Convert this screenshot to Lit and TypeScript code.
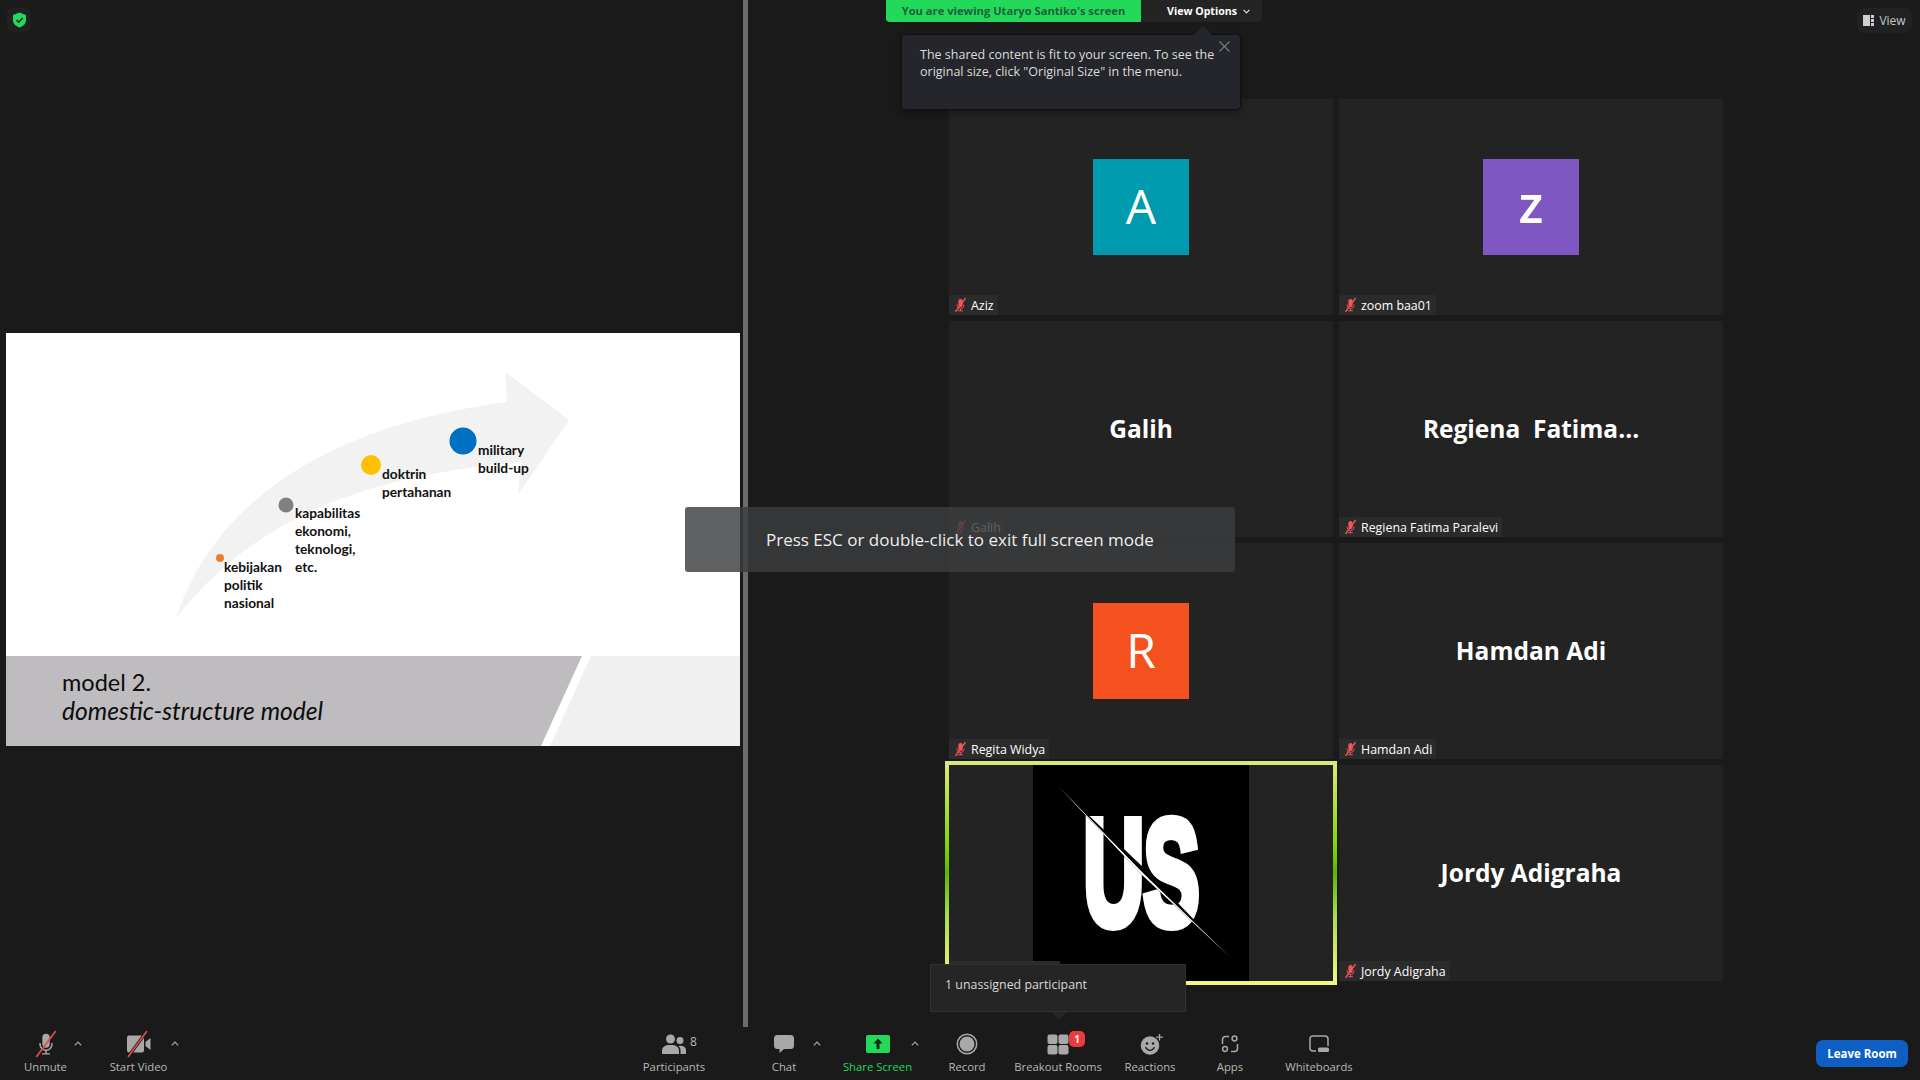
import { LitElement, html, css, svg } from 'lit';
import { customElement } from 'lit/decorators.js';

const micShape = svg`<path d="M12 2.5a3.4 3.4 0 0 0-3.4 3.4v6.2a3.4 3.4 0 0 0 6.8 0V5.9A3.4 3.4 0 0 0 12 2.5z"/><path d="M6.5 11v1.2a5.5 5.5 0 0 0 11 0V11" fill="none" stroke="currentColor" stroke-width="1.4"/><path d="M11.3 17.5h1.400v3h3v1.300H8.300v-1.300h3z"/>`;

const tileMic = html`<svg class="tag-mic" viewBox="0 0 24 24" fill="currentColor">${micShape}<path d="M4 23 20 1" stroke="#f2555a" stroke-width="2.4"/></svg>`;

const icons: Record<string, unknown> = {
  mic: html`<svg width="26" height="26" viewBox="0 0 24 24" fill="currentColor">${micShape}<path d="M3 24 21 0" stroke="#e8474e" stroke-width="1.6"/></svg>`,
  video: html`<svg width="28" height="26" viewBox="0 0 28 26" fill="currentColor"><path d="M2 6.500a2 2 0 0 1 2-2h13a2 2 0 0 1 2 2v13a2 2 0 0 1-2 2H4a2 2 0 0 1-2-2z"/><path d="M20.500 11 25.500 7v12l-5-4z"/><path d="M3 26 22 0" stroke="#1a1a1a" stroke-width="3"/><path d="M3 26 22 0" stroke="#e8474e" stroke-width="1.6"/></svg>`,
  people: html`<svg width="26" height="22" viewBox="0 0 26 22" fill="currentColor"><circle cx="9.5" cy="6" r="4.5"/><circle cx="19" cy="7.5" r="3.5"/><path d="M1 21v-3.500C1 14 4 12 9.500 12s8.500 2 8.500 5.500V21z"/><path d="M19.500 21v-3.500c0-2-.7-3.400-2-4.600 .6-.1 1.200-.1 1.800-.1 3.700 0 5.700 1.500 5.700 4.500V21z"/></svg>`,
  chat: html`<svg width="22" height="20" viewBox="0 0 22 20" fill="currentColor"><path d="M4.500 1h13A3.500 3.500 0 0 1 21 4.500v7a3.500 3.500 0 0 1-3.500 3.500H11l-4.500 4v-4h-2A3.500 3.500 0 0 1 1 11.500v-7A3.500 3.500 0 0 1 4.500 1z"/></svg>`,
  share: html`<svg width="24" height="18" viewBox="0 0 24 18"><rect width="24" height="18" rx="2" fill="#23d959"/><path d="M12 3.500 16.500 8.500h-3v5.500h-3V8.500h-3z" fill="#10291a"/></svg>`,
  record: html`<svg width="22" height="22" viewBox="0 0 22 22"><circle cx="11" cy="11" r="9.7" fill="none" stroke="currentColor" stroke-width="1.5"/><circle cx="11" cy="11" r="7.5" fill="currentColor"/></svg>`,
  rooms: html`<svg width="22" height="21" viewBox="0 0 22 21" fill="currentColor"><rect x="0.5" y="0.5" width="10" height="9.5" rx="2"/><rect x="11.5" y="0.5" width="10" height="9.5" rx="2"/><rect x="0.5" y="11" width="10" height="9.5" rx="2"/><rect x="11.5" y="11" width="10" height="9.5" rx="2"/></svg>`,
  reactions: html`<svg width="24" height="22" viewBox="-2 0 24 22"><circle cx="10" cy="12.5" r="9.3" fill="currentColor"/><circle cx="7" cy="10.5" r="1.2" fill="#1a1a1a"/><circle cx="13" cy="10.5" r="1.2" fill="#1a1a1a"/><path d="M5.800 14.500c1 2 2.500 2.800 4.200 2.800s3.200-.8 4.200-2.800" fill="none" stroke="#1a1a1a" stroke-width="1.3" stroke-linecap="round"/><path d="M19.500 1v6.500M16.200 4.200h6.600" stroke="currentColor" stroke-width="1.3"/></svg>`,
  apps: html`<svg width="20" height="20" viewBox="0 0 20 20" fill="none" stroke="currentColor" stroke-width="1.5"><path d="M9 2.500H5.500a3 3 0 0 0-3 3V10"/><path d="M17.500 10v4.500a3 3 0 0 1-3 3H11"/><circle cx="14.5" cy="4.500" r="2.4"/><circle cx="5" cy="15" r="2.4"/></svg>`,
  board: html`<svg width="22" height="20" viewBox="0 0 22 20"><path d="M8 17H5a3 3 0 0 1-3-3V5a3 3 0 0 1 3-3h12a3 3 0 0 1 3 3v7" fill="none" stroke="currentColor" stroke-width="1.5"/><rect x="10" y="13.5" width="11" height="4.5" rx="1.5" fill="currentColor"/></svg>`,
};

interface Tool { cls: string; label: string; icon: string; caret?: boolean; count?: string; badge?: string; }

const tools: Tool[] = [
  { cls: 'unmute', label: 'Unmute', icon: 'mic', caret: true },
  { cls: 'start', label: 'Start Video', icon: 'video', caret: true },
  { cls: 'participants', label: 'Participants', icon: 'people', count: '8' },
  { cls: 'chat', label: 'Chat', icon: 'chat', caret: true },
  { cls: 'share', label: 'Share Screen', icon: 'share', caret: true },
  { cls: 'record', label: 'Record', icon: 'record' },
  { cls: 'rooms', label: 'Breakout Rooms', icon: 'rooms', badge: '1' },
  { cls: 'reactions', label: 'Reactions', icon: 'reactions' },
  { cls: 'apps', label: 'Apps', icon: 'apps' },
  { cls: 'board', label: 'Whiteboards', icon: 'board' },
];

const steps = [
  { x: 224, y: 558, lines: ['kebijakan', 'politik', 'nasional'] },
  { x: 295, y: 504, lines: ['kapabilitas', 'ekonomi,', 'teknologi,', 'etc.'] },
  { x: 382, y: 465, lines: ['doktrin', 'pertahanan'] },
  { x: 478, y: 441, lines: ['military', 'build-up'] },
];

@customElement('app-root')
export class AppRoot extends LitElement {
  static styles = css`
    :host {
      display: block;
      width: 1920px;
      height: 1080px;
      position: relative;
      overflow: hidden;
      background: #1a1a1a;
      font-family: "Open Sans", "Noto Sans", sans-serif;
      color: #fff;
    }
    .stage { display: flex; height: 1027px; }
    .share-pane { width: 743px; box-sizing: border-box; padding: 333px 0 0 6px; }
    .divider { width: 5px; background: #6b6b6b; }
    .gallery {
      display: grid;
      grid-template-columns: repeat(2, 384px);
      grid-auto-rows: 216px;
      gap: 6px;
      padding: 99px 0 0 201px;
    }

    .slide { position: relative; width: 734px; height: 413px; background: #fff; display: flex; flex-direction: column; justify-content: flex-end; font-family: Lato, sans-serif; color: #111; }
    .slide svg { position: absolute; left: 0; top: 0; }
    .step { position: absolute; font-weight: 700; font-size: 13.7px; line-height: 18px; white-space: nowrap; }
    .band { position: relative; height: 90px; box-sizing: border-box; padding: 12px 0 0 56px; font-size: 23.5px; line-height: 28.5px; font-weight: 400; color: #0c0c0c; }
    .band::before, .band::after { content: ''; position: absolute; inset: 0; }
    .band::before { background: #bebcbf; clip-path: polygon(0 0, 576px 0, 535px 100%, 0 100%); }
    .band::after { background: #f0f0f0; clip-path: polygon(585px 0, 100% 0, 100% 100%, 544px 100%); }
    .band div { position: relative; z-index: 1; }
    .band em { font-style: italic; font-size: 24.6px; }

    .tile { position: relative; background: #232323; display: flex; align-items: center; justify-content: center; }
    .name { font-size: 24.5px; font-weight: 700; white-space: pre; position: relative; top: -1px; }
    .avatar { width: 96px; height: 96px; display: flex; align-items: center; justify-content: center; font-size: 48px; font-weight: 500; padding-bottom: 4px; box-sizing: border-box; }
    .avatar.a { background: #009aae; }
    .avatar.z { background: #7e57c2; font-size: 52px; font-weight: 600; padding-bottom: 10px; }
    .avatar.r { background: #f4511e; }
    .tag { position: absolute; left: 0; bottom: 0; height: 20px; padding: 0 4px; display: flex; align-items: center; gap: 3px; background: #2b2b2b; font-size: 12.4px; white-space: nowrap; }
    .tag.blank { width: 103px; }
    .tag-mic { width: 15px; height: 16px; color: #f2555a; flex: none; }
    .tile.active::after {
      content: '';
      position: absolute;
      inset: -4px;
      border: 4px solid;
      border-image: linear-gradient(#dbe87c 0%, #7ed600 38%, #5cb800 50%, #a9dc55 70%, #f1f77f 100%) 1;
      pointer-events: none;
    }
    .us { position: relative; width: 216px; height: 216px; background: #000; overflow: hidden; display: flex; align-items: center; justify-content: center; }
    .us span {
      font-family: "Liberation Sans", sans-serif;
      font-weight: 700;
      font-size: 150px;
      line-height: 1;
      letter-spacing: -1px;
      -webkit-text-stroke: 10px #fff;
      transform: scaleX(.56);
      white-space: nowrap;
    }
    .us svg { position: absolute; left: 0; top: 0; }

    .toolbar { display: flex; align-items: flex-start; height: 53px; box-sizing: border-box; padding-top: 4px; }
    .tool { display: flex; flex-direction: column; align-items: center; color: #a8a8a8; flex: none; }
    .tool svg { overflow: visible; }
    .tool-icon { position: relative; height: 26px; display: flex; align-items: center; justify-content: center; }
    .tool label { font-size: 11.3px; line-height: 16px; margin-top: 2px; color: #b8b8b8; white-space: nowrap; }
    .caret { flex: none; width: 14px; margin-left: -7px; height: 24px; display: flex; align-items: center; justify-content: center; color: #a8a8a8; }
    .count { position: absolute; left: 100%; top: 4px; margin-left: 3px; font-size: 12px; line-height: 14px; color: #b8b8b8; }
    .badge { position: absolute; left: 50%; top: 0; margin-left: 11px; width: 16px; height: 16px; border-radius: 5px; background: #ee3a3f; color: #fff; font-size: 10px; font-weight: 700; line-height: 16px; text-align: center; }
    .unmute { margin-left: 13px; width: 65px; }
    .start { margin-left: 17px; width: 73px; }
    .participants { margin-left: 456px; width: 72px; }
    .chat { margin-left: 41px; width: 66px; }
    .share { margin-left: 16px; width: 75px; }
    .share label { color: #23d959; }
    .record { margin-left: 25px; width: 40px; }
    .rooms { margin-left: 26px; width: 90px; }
    .reactions { margin-left: 17px; width: 60px; }
    .apps { margin-left: 30px; width: 40px; }
    .board { margin-left: 31px; width: 76px; }
    .leave { margin: 9px 12px 0 auto; width: 92px; height: 27px; border: 0; border-radius: 7px; background: #0e5fc4; color: #fff; font: 700 11.5px "Open Sans", sans-serif; }

    .shield { position: absolute; left: 7px; top: 8px; width: 24px; height: 24px; border-radius: 6px; background: #212121; display: flex; align-items: center; justify-content: center; }
    .view { position: absolute; left: 1857px; top: 8px; width: 55px; height: 25px; border-radius: 8px; background: #212121; display: flex; align-items: center; justify-content: center; gap: 5px; font-size: 12px; color: #c8c8c8; }
    .banner { position: absolute; left: 886px; top: 0; width: 376px; height: 22px; display: flex; border-radius: 0 0 4px 4px; overflow: hidden; background: #242424; font-size: 11.2px; font-weight: 700; line-height: 22px; }
    .viewing { width: 255px; background: #23d959; color: #1f5f3c; text-align: center; }
    .options { flex: 1; display: flex; align-items: center; justify-content: center; gap: 6px; padding-left: 14px; font-size: 10.6px; }
    .tip { position: absolute; left: 901px; top: 34px; width: 340px; height: 76px; box-sizing: border-box; padding: 11px 0 0 18px; background: #25262b; border: 1px solid #101010; border-radius: 4px; font-size: 12.5px; line-height: 17px; color: #dcdcdc; box-shadow: 0 2px 6px rgba(0,0,0,.4); }
    .tip::before { content: ''; position: absolute; left: 295px; top: -7px; width: 12px; height: 12px; background: #25262b; transform: rotate(45deg); }
    .tip p { margin: 0; position: relative; white-space: nowrap; }
    .tip svg { position: absolute; right: 10px; top: 6px; }
    .esc { position: absolute; left: 685px; top: 507px; width: 550px; height: 65px; box-sizing: border-box; padding-left: 81px; display: flex; align-items: center; border-radius: 3px; background: rgba(60,61,63,.82); font-size: 17px; color: #eee; }
    .unassigned { position: absolute; left: 930px; top: 964px; width: 256px; height: 48px; box-sizing: border-box; padding: 0 0 7px 14px; display: flex; align-items: center; background: #252525; border: 1px solid #303030; font-size: 12.4px; color: #d8d8d8; }
    .unassigned::after { content: ''; position: absolute; left: 120px; bottom: -9px; border: solid transparent; border-width: 8px 8px 0; border-top-color: #252525; }
  `;

  private renderTool(t: Tool) {
    return html`
      <div class="tool ${t.cls}">
        <div class="tool-icon">
          ${icons[t.icon]}
          ${t.count ? html`<span class="count">${t.count}</span>` : ''}
          ${t.badge ? html`<span class="badge">${t.badge}</span>` : ''}
        </div>
        <label>${t.label}</label>
      </div>
      ${t.caret ? html`<div class="caret"><svg width="8" height="5" viewBox="0 0 8 5" fill="none" stroke="currentColor" stroke-width="1.2"><path d="M.8 4.300 4 1l3.200 3.300"/></svg></div>` : ''}
    `;
  }

  private renderSlide() {
    return html`
      <div class="slide">
        <svg width="734" height="413" viewBox="6 333 734 413">
          <path d="M176 618C215 500 330 425 507 402L505 372L569 420L518 495L521 462C380 475 260 510 176 618Z" fill="#f2f2f2"/>
          <circle cx="220" cy="558" r="4" fill="#ed7d31"/>
          <circle cx="286" cy="505" r="7.5" fill="#808080"/>
          <circle cx="371" cy="465" r="10" fill="#ffc000"/>
          <circle cx="463" cy="441" r="13.5" fill="#0070c0"/>
        </svg>
        ${steps.map(
          (s) => html`<div class="step" style="left:${s.x - 6}px;top:${s.y - 333}px">${s.lines.map((l) => html`<div>${l}</div>`)}</div>`
        )}
        <div class="band">
          <div>model 2.</div>
          <div><em>domestic-structure model</em></div>
        </div>
      </div>
    `;
  }

  private renderTile(label: string, body: unknown) {
    return html`<div class="tile">${body}<div class="tag">${tileMic}<span>${label}</span></div></div>`;
  }

  render() {
    return html`
      <div class="stage">
        <div class="share-pane">${this.renderSlide()}</div>
        <div class="divider"></div>
        <div class="gallery">
          ${this.renderTile('Aziz', html`<div class="avatar a">A</div>`)}
          ${this.renderTile('zoom baa01', html`<div class="avatar z">z</div>`)}
          ${this.renderTile('Galih', html`<div class="name">Galih</div>`)}
          ${this.renderTile('Regiena Fatima Paralevi', html`<div class="name">Regiena  Fatima...</div>`)}
          ${this.renderTile('Regita Widya', html`<div class="avatar r">R</div>`)}
          ${this.renderTile('Hamdan Adi', html`<div class="name">Hamdan Adi</div>`)}
          <div class="tile active">
            <div class="us">
              <span>US</span>
              <svg width="216" height="216" viewBox="1033 765 216 216">
                <path d="M1059 787 1146 870 1230 957 1143 876Z" fill="#000"/>
                <path d="M1059 787 1144 874 1230 957 1142 875Z" fill="#fff"/>
              </svg>
            </div>
            <div class="tag blank"></div>
          </div>
          ${this.renderTile('Jordy Adigraha', html`<div class="name">Jordy Adigraha</div>`)}
        </div>
      </div>
      <div class="toolbar">
        ${tools.map((t) => this.renderTool(t))}
        <button class="leave">Leave Room</button>
      </div>

      <div class="shield">
        <svg width="15" height="16" viewBox="0 0 15 16"><path d="M7.500 .5 14 3v5c0 3.800-2.700 6.200-6.500 7.500C3.700 14.200 1 11.800 1 8V3z" fill="#23d959"/><path d="M4.500 8 6.700 10.200 10.700 6" fill="none" stroke="#123" stroke-width="1.5"/></svg>
      </div>
      <div class="view">
        <svg width="11" height="11" viewBox="0 0 11 11" fill="#d0d0d0"><rect width="7" height="11"/><rect x="8" width="3" height="3"/><rect x="8" y="4" width="3" height="3"/><rect x="8" y="8" width="3" height="3"/></svg>
        View
      </div>
      <div class="banner">
        <div class="viewing">You are viewing Utaryo Santiko's screen</div>
        <div class="options">View Options
          <svg width="7" height="5" viewBox="0 0 7 5" fill="none" stroke="#ddd" stroke-width="1.2"><path d="M.6.8 3.500 3.800 6.400.8"/></svg>
        </div>
      </div>
      <div class="tip">
        <p>The shared content is fit to your screen. To see the<br />original size, click "Original Size" in the menu.</p>
        <svg width="11" height="11" viewBox="0 0 11 11" stroke="#777c85" stroke-width="1.1"><path d="M.5.5 10.500 10.500M10.500.5 .5 10.500"/></svg>
      </div>
      <div class="esc">Press ESC or double-click to exit full screen mode</div>
      <div class="unassigned">1 unassigned participant</div>
    `;
  }
}
